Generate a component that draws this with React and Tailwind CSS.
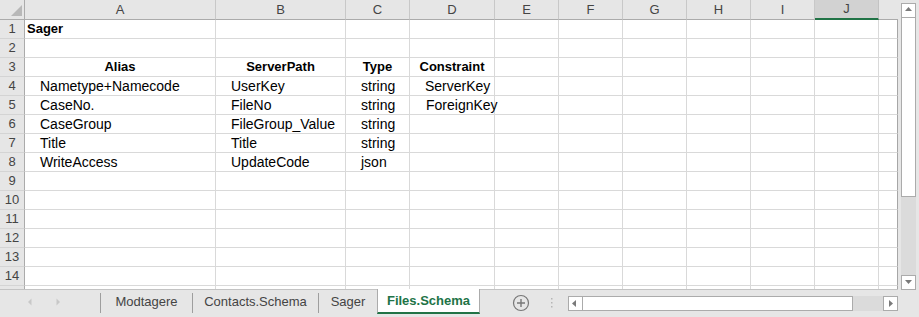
import React from "react";

const GRID =
  "grid grid-cols-[25px_191px_130px_64px_85px_64px_64px_64px_64px_64px_64px_19px]";
const LETTERS = ["A", "B", "C", "D", "E", "F", "G", "H", "I", "J"];

const DATA = {
  1: [{ t: "Sager", b: true, pad: "pl-[2px]" }],
  3: [
    { t: "Alias", b: true, c: true },
    { t: "ServerPath", b: true, c: true },
    { t: "Type", b: true, c: true },
    { t: "Constraint", b: true, c: true },
  ],
  4: [{ t: "Nametype+Namecode" }, { t: "UserKey" }, { t: "string" }, { t: "ServerKey" }],
  5: [{ t: "CaseNo." }, { t: "FileNo" }, { t: "string" }, { t: "ForeignKey", pad: "pl-[16px]" }],
  6: [{ t: "CaseGroup" }, { t: "FileGroup_Value" }, { t: "string" }],
  7: [{ t: "Title" }, { t: "Title" }, { t: "string" }],
  8: [{ t: "WriteAccess" }, { t: "UpdateCode" }, { t: "json" }],
};

function Cell({ cell }) {
  if (!cell) {
    return <div className="h-[19px] border-b border-r border-[#d9d9d9]" />;
  }
  const align = cell.c ? "justify-center" : cell.pad || "pl-[15px]";
  return (
    <div
      className={`flex h-[19px] items-center whitespace-nowrap border-b border-r border-[#d9d9d9] leading-[18px] text-black ${align} ${
        cell.b ? "text-[13px] font-bold" : "text-[14px]"
      }`}
    >
      {cell.t}
    </div>
  );
}

function Sheet() {
  const rows = Array.from({ length: 15 }, (_, i) => i + 1);
  return (
    <div className="h-[290px] w-[898px] overflow-hidden border-b border-[#c3c3c3]">
      {/* column header */}
      <div className={`${GRID} h-[20px]`}>
        <div className="relative h-[20px] border-b border-r border-[#ababab] bg-[#e6e6e6]">
          <svg className="absolute left-0 top-0" width="25" height="19">
            <polygon points="22,5 22,16 11,16" fill="#b8b8b8" />
          </svg>
        </div>
        {LETTERS.map((l) =>
          l === "J" ? (
            <div
              key={l}
              className="flex h-[20px] items-center justify-center border-b-2 border-r border-b-[#217346] border-r-[#c3c3c3] bg-[#d2d2d2] text-[13px] text-[#444]"
            >
              {l}
            </div>
          ) : (
            <div
              key={l}
              className="flex h-[20px] items-center justify-center border-b border-r border-b-[#ababab] border-r-[#c8c8c8] bg-[#e6e6e6] text-[13px] text-[#444]"
            >
              {l}
            </div>
          )
        )}
        <div className="h-[20px] border-b border-[#ababab] bg-[#e6e6e6]" />
      </div>

      {rows.map((r) => {
        const cells = DATA[r] || [];
        return (
          <div key={r} className={`${GRID} h-[19px]`}>
            <div className="flex h-[19px] items-center justify-center border-b border-r border-b-[#d4d4d4] border-r-[#ababab] bg-[#e6e6e6] text-[13px] text-[#444]">
              {r < 15 ? r : ""}
            </div>
            {LETTERS.map((l, i) => (
              <Cell key={l} cell={cells[i]} />
            ))}
            <div className="h-[19px] border-b border-r border-b-[#d9d9d9] border-r-[#a6a6a6]" />
          </div>
        );
      })}
    </div>
  );
}

function Arrow({ dir }) {
  const pts = {
    up: "2,6 9,6 5.5,2",
    down: "2,3 9,3 5.5,7",
    left: "6,2 6,9 2,5.5",
    right: "4,2 4,9 8,5.5",
  };
  return (
    <svg width="11" height="11" viewBox="0 0 11 11">
      <polygon points={pts[dir]} fill="#7a7a7a" />
    </svg>
  );
}

function VScroll() {
  return (
    <div className="w-[21px] pl-[3px] pt-[3px]">
      <div className="flex h-[287px] w-[15px] flex-col">
        <div className="flex h-[15px] items-center justify-center border border-[#ababab] bg-white">
          <Arrow dir="up" />
        </div>
        <div className="h-[179px] border-x border-b border-[#ababab] bg-white" />
        <div className="flex-1 bg-[#dbdbdb]" />
        <div className="flex h-[15px] items-center justify-center border border-[#ababab] bg-white">
          <Arrow dir="down" />
        </div>
      </div>
    </div>
  );
}

function Sep() {
  return <div className="mt-[3px] h-[20px] w-px bg-[#9e9e9e]" />;
}

function Tabs() {
  return (
    <div className="flex h-[27px] items-start">
      <div className="flex h-[24px] w-[100px] items-center">
        <svg className="ml-[27px]" width="6" height="8" viewBox="0 0 6 8">
          <polygon points="4.5,0.5 4.5,7.5 1,4" fill="#c8c8c8" />
        </svg>
        <svg className="ml-[22px]" width="6" height="8" viewBox="0 0 6 8">
          <polygon points="1.5,0.5 1.5,7.5 5,4" fill="#c8c8c8" />
        </svg>
      </div>
      <Sep />
      <div className="flex h-[24px] w-[91px] items-center justify-center text-[13px] text-[#444]">
        Modtagere
      </div>
      <Sep />
      <div className="flex h-[24px] w-[125px] items-center justify-center text-[13px] text-[#444]">
        Contacts.Schema
      </div>
      <Sep />
      <div className="flex h-[24px] w-[58px] items-center justify-center text-[13px] text-[#444]">
        Sager
      </div>
      <div className="-mt-px flex h-[25px] w-[103px] items-center justify-center border-x border-b-2 border-x-[#ababab] border-b-[#217346] bg-white text-[13px] font-bold text-[#217346]">
        Files.Schema
      </div>
      <svg className="ml-[32px] mt-[4px]" width="18" height="18" viewBox="0 0 18 18">
        <circle cx="9" cy="9" r="7.5" fill="none" stroke="#777" strokeWidth="1.2" />
        <path d="M9 5v8M5 9h8" stroke="#777" strokeWidth="1.4" />
      </svg>
      <svg className="ml-[20px] mt-[8px]" width="4" height="10" viewBox="0 0 4 10">
        <rect x="1" y="0" width="1.5" height="1.5" fill="#b5b5b5" />
        <rect x="1" y="4" width="1.5" height="1.5" fill="#b5b5b5" />
        <rect x="1" y="8" width="1.5" height="1.5" fill="#b5b5b5" />
      </svg>
      <div className="ml-[14px] mt-[6px] flex h-[15px] w-[330px]">
        <div className="flex w-[15px] items-center justify-center border border-[#ababab] bg-white">
          <Arrow dir="left" />
        </div>
        <div className="w-[270px] border-y border-r border-[#ababab] bg-white" />
        <div className="flex-1 bg-[#dbdbdb]" />
        <div className="flex w-[15px] items-center justify-center border border-[#ababab] bg-white">
          <Arrow dir="right" />
        </div>
      </div>
    </div>
  );
}

export default function App() {
  return (
    <div className="flex h-[317px] w-[919px] flex-col overflow-hidden bg-[#e6e6e6] font-['Liberation_Sans',Arial,sans-serif]">
      <div className="flex bg-white">
        <Sheet />
        <div className="bg-[#e6e6e6]">
          <VScroll />
        </div>
      </div>
      <Tabs />
    </div>
  );
}
